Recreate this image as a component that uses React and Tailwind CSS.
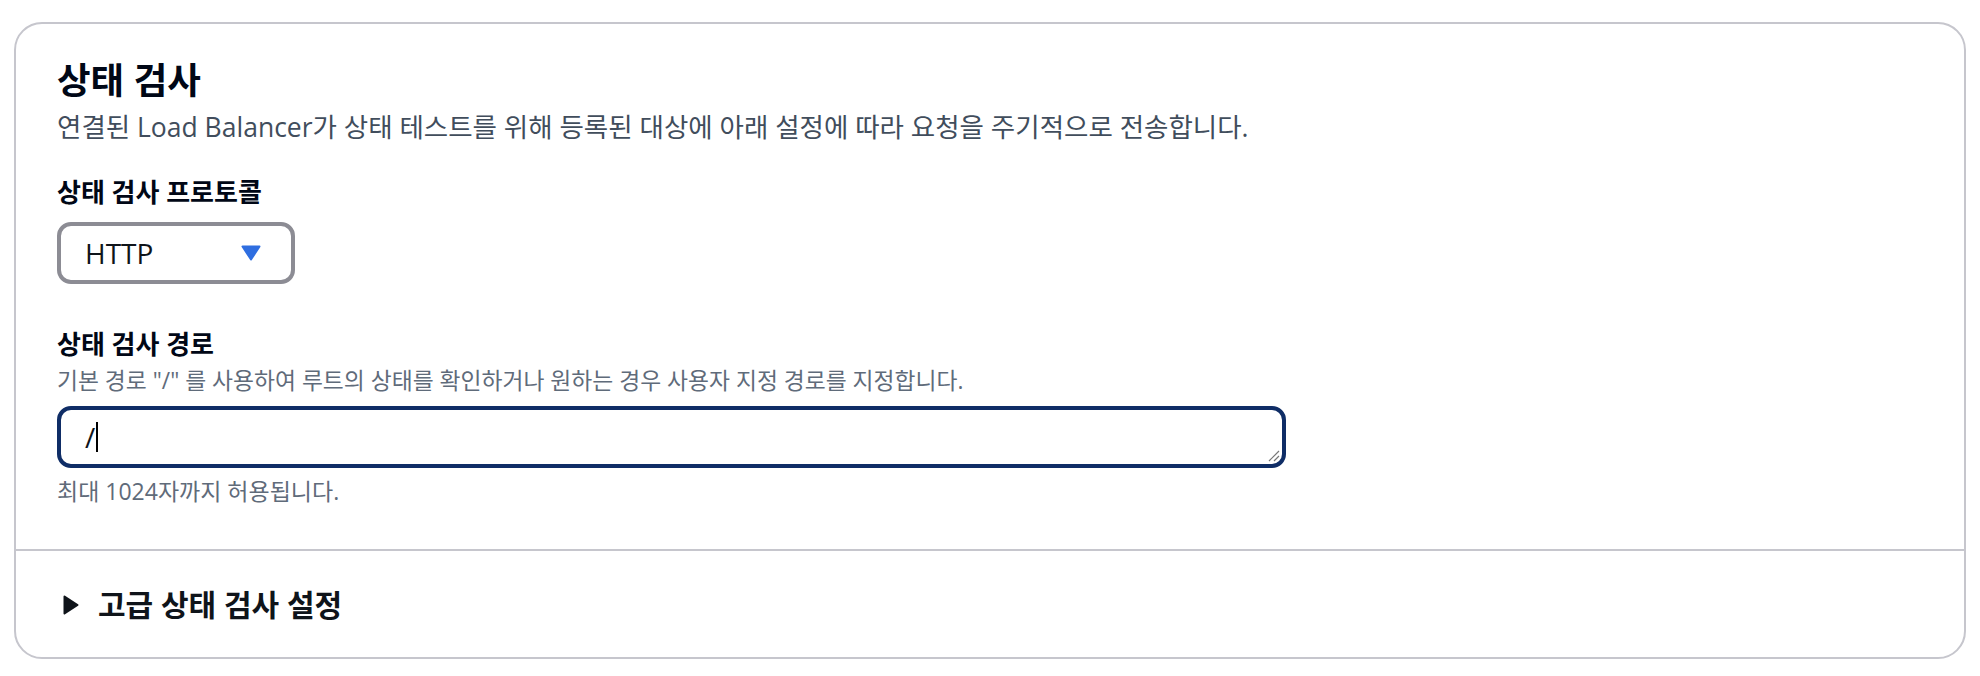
import React from "react";

const font = {
  fontFamily: '"Open Sans", "Noto Sans CJK KR", sans-serif',
};

function CaretDown() {
  return (
    <svg width="20" height="16" viewBox="0 0 20 16" className="shrink-0">
      <path d="M1.5 1.5 H18.5 L10 14.5 Z" fill="#2f6ee0" stroke="#2f6ee0" strokeWidth="2" strokeLinejoin="round" />
    </svg>
  );
}

function CaretRight() {
  return (
    <svg width="16" height="20" viewBox="0 0 16 20" className="shrink-0">
      <path d="M1.5 1.5 L14.5 10 L1.5 18.5 Z" fill="#0f141a" stroke="#0f141a" strokeWidth="2" strokeLinejoin="round" />
    </svg>
  );
}

function ResizeGrip() {
  return (
    <svg width="12" height="12" viewBox="0 0 12 12" className="absolute right-[2px] bottom-[2px]">
      <path d="M11 1 L1 11 M11 6 L6 11" stroke="#777" strokeWidth="1.2" />
    </svg>
  );
}

export default function App() {
  return (
    <div className="min-h-screen bg-white px-[14px] pt-[22px]" style={font}>
      <div className="rounded-[28px] border-2 border-[#c6c6cd] bg-white">
        {/* header + form */}
        <div className="px-[41px] pt-[35px] pb-[44px]">
          <h2 className="text-[36.5px] leading-[42px] font-bold text-[#000716]">상태 검사</h2>
          <p className="mt-[9px] text-[26.5px] leading-[35px] text-[#414d5c]">
            연결된 Load Balancer가 상태 테스트를 위해 등록된 대상에 아래 설정에 따라 요청을 주기적으로 전송합니다.
          </p>

          <div className="mt-[30px] text-[26px] leading-[35px] font-bold text-[#000716]">상태 검사 프로토콜</div>
          <div className="mt-[12px] flex h-[62px] w-[238px] items-center justify-between rounded-[14px] border-4 border-[#8c8c94] pl-[24px] pr-[30px]">
            <span className="text-[28px] text-[#0f141a]">HTTP</span>
            <CaretDown />
          </div>

          <div className="mt-[43px] text-[26px] leading-[35px] font-bold text-[#000716]">상태 검사 경로</div>
          <div className="mt-[5px] text-[22.8px] leading-[28px] text-[#5f6b7a]">
            기본 경로 "/" 를 사용하여 루트의 상태를 확인하거나 원하는 경우 사용자 지정 경로를 지정합니다.
          </div>
          <div className="relative mt-[11px] flex h-[62px] w-[1229px] items-center rounded-[14px] border-4 border-[#0f2d66] pl-[24px]">
            <span className="text-[28px] leading-[32px] text-[#0f141a]">/</span>
            <span className="ml-[1px] h-[30px] w-[2px] bg-black" />
            <ResizeGrip />
          </div>
          <div className="mt-[9px] text-[23px] leading-[28px] text-[#5f6b7a]">최대 1024자까지 허용됩니다.</div>
        </div>

        <div className="h-[2px] bg-[#c6c6cd]" />

        {/* expandable section */}
        <div className="flex items-center gap-[19px] px-[47px] pt-[33px] pb-[31px]">
          <CaretRight />
          <span className="text-[30px] leading-[42px] font-bold text-[#0f141a]">고급 상태 검사 설정</span>
        </div>
      </div>
    </div>
  );
}
